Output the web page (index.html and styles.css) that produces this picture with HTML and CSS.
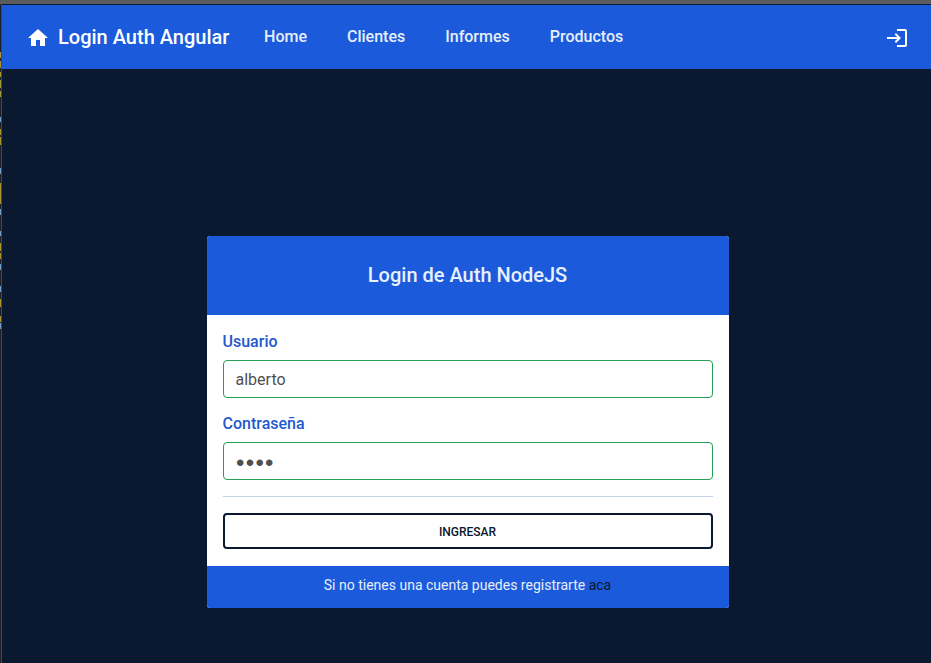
FILE: index.html
```html
<!DOCTYPE html>
<html lang="es">
<head>
<meta charset="utf-8">
<title>Login Auth Angular</title>
<link rel="stylesheet" href="styles.css">
</head>
<body>
<div class="window-edge"></div>
<div class="app">
  <header class="toolbar">
    <a class="brand">
      <svg class="icon" viewBox="0 0 24 24"><path d="M10 20v-6h4v6h5v-8h3L12 3 2 12h3v8z"/></svg>
      <span>Login Auth Angular</span>
    </a>
    <nav class="nav">
      <a>Home</a>
      <a>Clientes</a>
      <a>Informes</a>
      <a>Productos</a>
    </nav>
    <a class="login-link" aria-label="Login">
      <svg class="icon" viewBox="0 0 24 24"><path d="M11 7 9.600 8.400l2.600 2.600H2v2h10.200l-2.600 2.600L11 17l5-5zM20 19h-8v2h8c1.100 0 2-.9 2-2V5c0-1.100-.9-2-2-2h-8v2h8z"/></svg>
    </a>
  </header>
  <main class="content">
    <form class="card">
      <h1 class="card-header">Login de Auth NodeJS</h1>
      <div class="card-body">
        <label for="user">Usuario</label>
        <input id="user" type="text" value="alberto">
        <label for="pass">Contraseña</label>
        <input id="pass" type="password" value="1234">
        <hr>
        <button type="button">INGRESAR</button>
      </div>
      <footer class="card-footer">Si no tienes una cuenta puedes registrarte <a>aca</a></footer>
    </form>
  </main>
</div>
</body>
</html>
```
FILE: styles.css
```css
* { box-sizing: border-box; }
body {
  margin: 0;
  height: 663px;
  display: flex;
  overflow: hidden;
  background: #0a1830;
  border-top: 4px solid #5b5c5e;
  font-family: Roboto, sans-serif;
}
.window-edge {
  width: 2px;
  border-right: 1px solid #4b4543;
  background: linear-gradient(#202024 48px, #a8942f 0 54px, #202024 0 57px, #a8942f 0 64px, #202024 0 68px, #a8942f 0 73px, #202024 0 76px, #a09a3a 0 84px, #202024 0 87px, #a09a3a 0 93px, #202024 0 113px, #6f9fc5 0 118px, #202024 0 125px, #a8942f 0 131px, #202024 0 133px, #a8942f 0 141px, #202024 0 164px, #6f9fc5 0 170px, #202024 0 179px, #a8942f 0 200px, #202024 0 205px, #6f9fc5 0 211px, #202024 0 227px, #6f9fc5 0 232px, #202024 0 239px, #a8942f 0 247px, #202024 0 249px, #a8942f 0 255px, #202024 0 260px, #6f9fc5 0 266px, #202024 0 282px, #6f9fc5 0 288px, #202024 0 295px, #a8942f 0 303px, #202024 0 312px, #a8942f 0 318px, #202024 0 319px, #6f9fc5 0 325px, #202024 0);
}
.app {
  flex: 1;
  display: flex;
  flex-direction: column;
  border-top: 1px solid #0a1830;
}
.toolbar {
  height: 64px;
  display: flex;
  align-items: center;
  padding: 0 22px 0 24px;
  background: #1a5adb;
  color: #fff;
}
.icon { display: block; width: 24px; height: 24px; margin-top: 2px; fill: currentColor; }
.brand {
  display: flex;
  align-items: center;
  gap: 8px;
  font-size: 20px;
  font-weight: 500;
}
.nav {
  display: flex;
  gap: 40px;
  margin-left: 34.700px;
  font-size: 16px;
  font-weight: 500;
  line-height: 20px;
  color: #e6eefc;
}
.login-link { margin-left: auto; }
.content { padding: 167px 0 0 205px; }
.card {
  width: 522px;
  border-radius: 3px;
  overflow: hidden;
  background: #fff;
}
.card-header {
  margin: 0;
  height: 79px;
  padding-right: 1px;
  line-height: 79px;
  background: #1a5adb;
  color: #e9f0fd;
  font-size: 20px;
  font-weight: 500;
  text-align: center;
}
.card-body {
  height: 251px;
  padding: 16px 16px 0;
}
label {
  display: block;
  height: 29px;
  margin-left: -0.500px;
  line-height: 21px;
  color: #2259cf;
  font-size: 16px;
  font-weight: 500;
}
input {
  display: block;
  width: 100%;
  height: 38px;
  margin: 0 0 15px;
  padding: 0 11.500px;
  border: 1px solid #26a055;
  border-radius: 4px;
  outline: 0;
  background: #fff;
  color: #505050;
  font: 16px Roboto, sans-serif;
}
input[type="password"] {
  padding: 3px 12px 0;
  font: 24px "Liberation Sans", sans-serif;
  letter-spacing: 1.300px;
}
hr {
  height: 1px;
  margin: 16px 0;
  border: 0;
  background: #c5d3ea;
}
button {
  display: block;
  width: 100%;
  height: 36px;
  padding: 2px 1px 0 0;
  border: 2px solid #0a1830;
  border-radius: 4px;
  background: #fff;
  color: #0a1830;
  font: 500 12px Roboto, sans-serif;
}
.card-footer {
  height: 42px;
  padding-right: 1px;
  line-height: 39px;
  background: #1a5adb;
  color: #e6eefc;
  font-size: 14px;
  text-align: center;
}
.card-footer a { color: #0a1830; }
```
